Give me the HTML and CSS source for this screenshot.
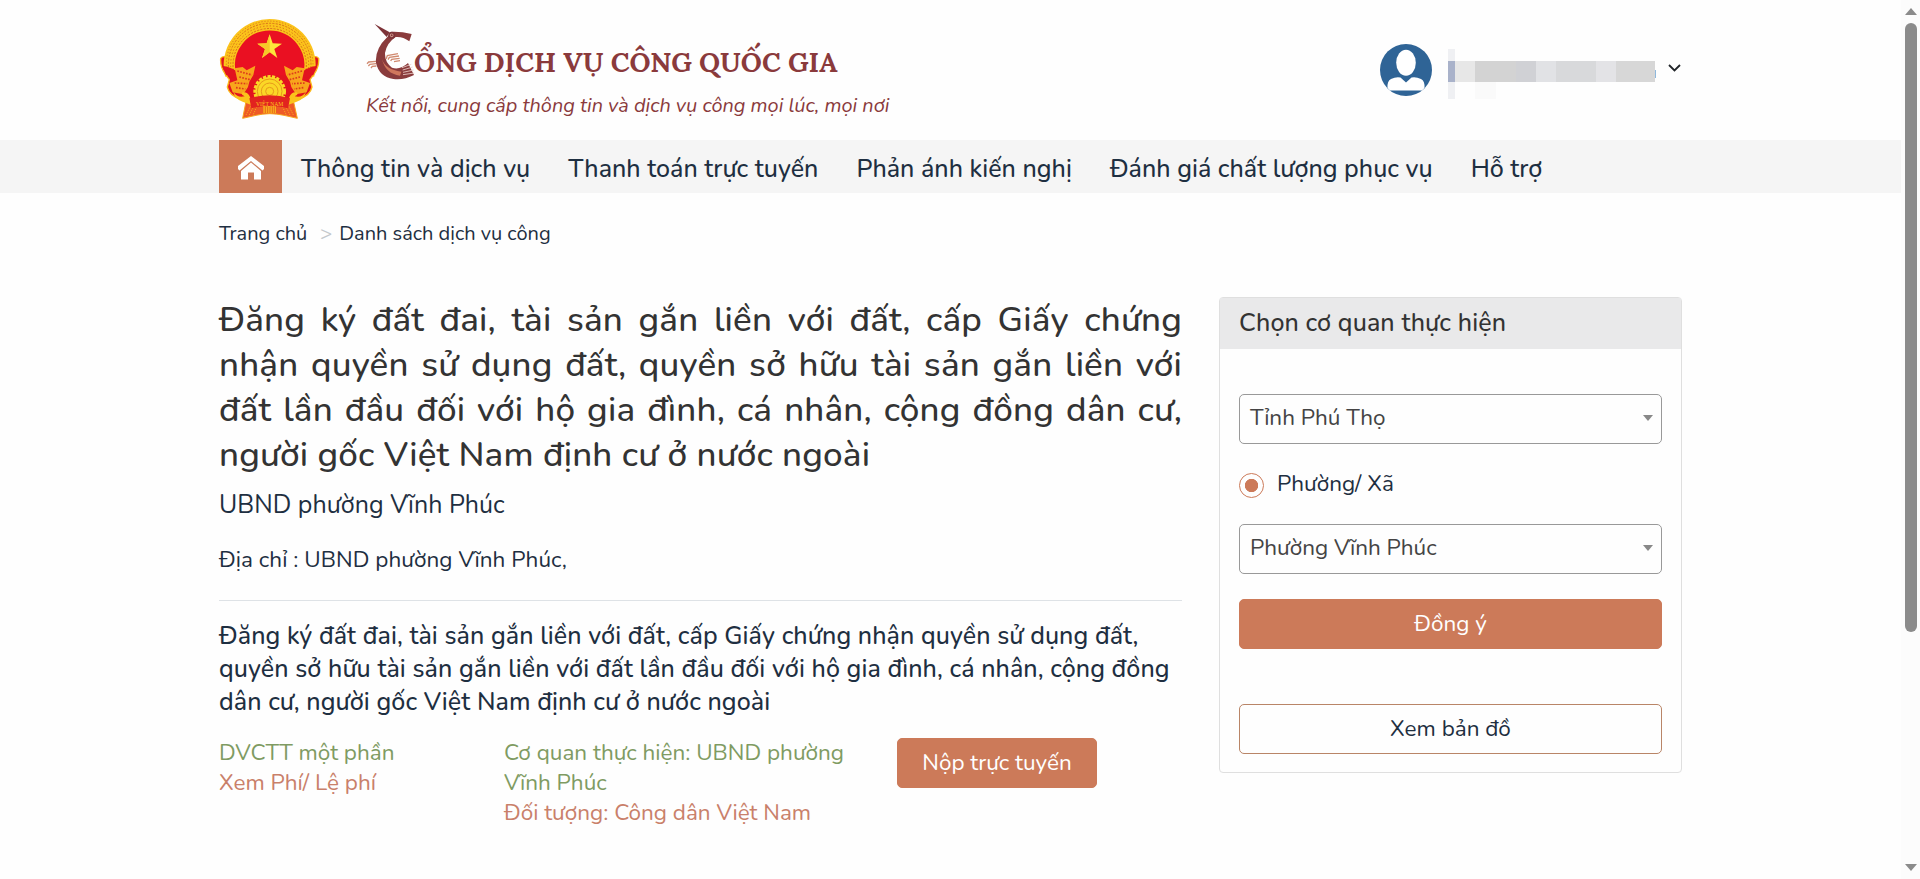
FILE: index.html
```html
<!DOCTYPE html>
<html lang="vi">
<head>
  <meta charset="UTF-8" />
  <meta name="viewport" content="width=device-width, initial-scale=1.0"/>
  <title>Cổng Dịch vụ công Quốc gia</title>
  <link rel="stylesheet" href="styles.css">
</head>
<body>
  <div class="page">
    <header class="header container">
      <svg class="emblem" viewBox="57 52 303 306">
        <!-- ribbon ends -->
        <path d="M128 356 L142 285 H276 L292 356 L252 347 Q209 337 168 347 Z" fill="#ee5a26" stroke="#f7a51c" stroke-width="3"/>
        <path d="M138 346 L152 318 M148 346 L160 322 M160 344 L170 322 M280 346 L266 318 M270 346 L258 322 M258 344 L248 322" stroke="#f7a51c" stroke-width="3" stroke-dasharray="4 3"/>
        <path d="M62 176 Q72 164 90 180 H328 Q346 164 356 176 Q358 200 343 222 L330 240 L336 262 Q330 288 296 298 L262 312 H156 L122 298 Q88 288 82 262 L88 240 L75 222 Q60 200 62 176 Z" fill="#e2131f" stroke="#fbb91a" stroke-width="4"/>
        <!-- rice wreath -->
        <path d="M92 227 A121 121 0 1 1 326 227" fill="#ea1022" stroke="#fbc31b" stroke-width="34"/>
        <g fill="none" stroke="#d9701a" stroke-width="3">
          <path d="M102 222 A110 110 0 1 1 316 222" stroke-dasharray="6 4"/>
          <path d="M95 222 A117 117 0 1 1 323 222" stroke-dasharray="4 6"/>
          <path d="M88 222 A124 124 0 1 1 330 222" stroke-dasharray="6 4"/>
          <path d="M82 222 A130 130 0 1 1 336 222" stroke-dasharray="3 6"/>
        </g>
        <path d="M66 198 Q98 200 128 230 Q100 240 78 226 Z M352 198 Q320 200 290 230 Q318 240 340 226 Z" fill="#e2131f"/>
        <path d="M104 206 L128 202 L140 212 L166 198 L160 226 L148 246 L144 262 L130 284 L98 278 L88 250 L112 242 Z M314 206 L290 202 L278 212 L252 198 L258 226 L270 246 L274 262 L288 284 L320 278 L330 250 L306 242 Z" fill="#f8a51c"/>
        <path d="M112 214 L156 226 M104 250 L142 252 M108 264 L136 268 M118 232 L150 240 M306 214 L262 226 M314 250 L276 252 M310 264 L282 268 M300 232 L268 240" stroke="#dd3a1c" stroke-width="5" stroke-dasharray="5 4"/>
        <path d="M209 104 L218 131 L246 132 L223 148 L232 175 L209 158 L186 175 L195 148 L172 132 L200 131 Z" fill="#fde63a"/>
        <path d="M209 104 V158 L186 175 L195 148 L172 132 L200 131 Z" fill="#f7c928"/>
        <!-- gear -->
        <circle cx="209" cy="275" r="43" fill="#fbd726" stroke="#fbd726" stroke-width="12" stroke-dasharray="9 4"/>
        <g fill="none" stroke="#e79a1b" stroke-width="3">
          <circle cx="209" cy="275" r="37"/>
          <circle cx="209" cy="275" r="25"/>
          <circle cx="209" cy="275" r="12"/>
        </g>
        <path d="M100 276 Q112 296 134 290 Q120 284 128 278 Q144 276 150 292 L154 316 L128 306 Q104 298 100 276 Z M318 276 Q306 296 284 290 Q298 284 290 278 Q274 276 268 292 L264 316 L290 306 Q314 298 318 276 Z" fill="#fbc31b"/>
        <path d="M148 296 Q209 278 270 296 L264 326 Q209 312 154 326 Z" fill="#e2231f"/>
        <path d="M190 320 H228 V340 H190 Z" fill="#f9b21c"/>
        <path d="M196 320 V340 M203 320 V340 M210 320 V340 M217 320 V340 M223 320 V340" stroke="#e2431f" stroke-width="2"/>
        <text class="emblem-text" x="209" y="318" text-anchor="middle">VIỆT NAM</text>
      </svg>

      <div class="brand">
        <div class="brand-title">
          <svg class="brand-bird" viewBox="498 68 147 171">
            <path d="M524 71 L569 96 L560 110 Z" fill="#7d3338"/>
            <path d="M575 94 Q605 93 635 101 L628 123 Q608 108 587 110 Q560 128 555 158 Q554 186 576 202 Q600 210 624 188 L642 224 Q612 240 580 236 Q538 230 528 188 Q524 146 562 110 Z" fill="#8a3b3c"/>
            <path d="M546 176 Q556 208 604 214 L600 226 Q556 220 546 176 Z" fill="#d0775c"/>
            <circle cx="575" cy="105" r="8" fill="#d9a294" stroke="#7d3338" stroke-width="5"/>
            <circle cx="575" cy="105" r="3" fill="#7d3338"/>
            <path d="M606 202 L634 192 M608 209 L638 200 M609 216 L641 209 M609 223 L643 218" stroke="#ecd0ca" stroke-width="2.5"/>
            <path d="M558 176 L562 166 L594 160 M564 178 L568 171 L597 167 M572 182 L575 177 L599 174 M582 184 L600 181 M528 183 L506 185 L501 190 M528 190 L510 192 L505 197 M529 197 L517 198 L513 203" fill="none" stroke="#d08a70" stroke-width="4"/>
          </svg>
          <span>ỔNG DỊCH VỤ CÔNG QUỐC GIA</span>
        </div>
        <div class="brand-slogan">Kết nối, cung cấp thông tin và dịch vụ công mọi lúc, mọi nơi</div>
      </div>

      <div class="user">
        <svg class="avatar" viewBox="0 0 52 52">
          <circle cx="26" cy="26" r="26" fill="#2f6496"/>
          <ellipse cx="26" cy="18.7" rx="9.8" ry="13" fill="#fff"/>
          <path d="M7.5 44 Q7 37 11 35 Q16 32.5 20.5 33.5 L26 38.5 L31.5 33.5 Q36 32.5 41 35 Q45 37 44.5 44 L42 46.5 H10 Z" fill="#fff"/>
        </svg>
        <svg class="user-name" viewBox="0 0 208 50">
          <path d="M0 0 H7 V50 H0 Z" fill="#eff0f3"/>
          <path d="M27 33 H48 V50 H27 Z" fill="#fafafa"/>
          <path d="M0 12 H7 V33 H0 Z" fill="#a9b2ca"/>
          <path d="M7 12 H27 V33 H7 Z" fill="#e7e7e7"/>
          <path d="M27 12 H68 V33 H27 Z" fill="#d3d3d3"/>
          <path d="M68 12 H88 V33 H68 Z" fill="#d0d1d5"/>
          <path d="M88 12 H108 V33 H88 Z" fill="#e1e2e5"/>
          <path d="M108 12 H148 V33 H108 Z" fill="#d8d9db"/>
          <path d="M148 12 H168 V33 H148 Z" fill="#e3e3e6"/>
          <path d="M168 12 H207 V33 H168 Z" fill="#d7d7d7"/>
          <path d="M207 21 H208 V29 H207 Z" fill="#8fb8dc"/>
        </svg>
        <svg class="user-caret" viewBox="0 0 13 8">
          <path d="M1 1 L6.5 6.5 L12 1" fill="none" stroke="#212529" stroke-width="1.8"/>
        </svg>
      </div>
    </header>

    <nav class="nav">
      <div class="nav-inner container">
        <a class="nav-home">
          <svg viewBox="0 0 26 24">
            <path d="M0 13 V10 L13 0 L26 10 V13 L24.5 14.5 L13 5 L1.5 14.5 Z" fill="#fff"/>
            <path d="M3 15 L13 6.5 L23 15 V23.5 H16 V16.5 H10 V23.5 H3 Z" fill="#fff"/>
          </svg>
        </a>
        <a class="nav-link">Thông tin và dịch vụ</a>
        <a class="nav-link">Thanh toán trực tuyến</a>
        <a class="nav-link">Phản ánh kiến nghị</a>
        <a class="nav-link">Đánh giá chất lượng phục vụ</a>
        <a class="nav-link">Hỗ trợ</a>
      </div>
    </nav>

    <div class="breadcrumb container">
      <a>Trang chủ</a>
      <span class="breadcrumb-sep">&gt;</span>
      <a>Danh sách dịch vụ công</a>
    </div>

    <main class="main container">
      <section class="content">
        <h1>Đăng ký đất đai, tài sản gắn liền với đất, cấp Giấy chứng nhận quyền sử dụng đất, quyền sở hữu tài sản gắn liền với đất lần đầu đối với hộ gia đình, cá nhân, cộng đồng dân cư, người gốc Việt Nam định cư ở nước ngoài</h1>
        <p class="agency">UBND phường Vĩnh Phúc</p>
        <p class="address">Địa chỉ : UBND phường Vĩnh Phúc,</p>
        <h2>Đăng ký đất đai, tài sản gắn liền với đất, cấp Giấy chứng nhận quyền sử dụng đất, quyền sở hữu tài sản gắn liền với đất lần đầu đối với hộ gia đình, cá nhân, cộng đồng dân cư, người gốc Việt Nam định cư ở nước ngoài</h2>
        <div class="service">
          <div class="service-col">
            <div class="green">DVCTT một phần</div>
            <a class="orange">Xem Phí/ Lệ phí</a>
          </div>
          <div class="service-col">
            <div class="green">Cơ quan thực hiện: UBND phường Vĩnh Phúc</div>
            <div class="orange">Đối tượng: Công dân Việt Nam</div>
          </div>
          <button class="btn">Nộp trực tuyến</button>
        </div>
      </section>

      <aside class="panel">
        <div class="panel-title">Chọn cơ quan thực hiện</div>
        <div class="panel-body">
          <div class="select"><span>Tỉnh Phú Thọ</span><i class="arrow"></i></div>
          <div class="radio"><i class="radio-dot"></i><span>Phường/ Xã</span></div>
          <div class="select"><span>Phường Vĩnh Phúc</span><i class="arrow"></i></div>
          <button class="btn btn-ok">Đồng ý</button>
          <button class="btn btn-map">Xem bản đồ</button>
        </div>
      </aside>
    </main>
  </div>

  <div class="scrollbar">
    <i class="scroll-up"></i>
    <div class="scroll-thumb"></div>
    <i class="scroll-down"></i>
  </div>
</body>
</html>
```
FILE: styles.css
```css
* {
    box-sizing: border-box;
}
body {
    margin: 0;
    height: 879px;
    overflow: hidden;
    display: flex;
    font-family: Nunito, 'Open Sans', 'Noto Sans', sans-serif;
    font-size: 22.5px;
    line-height: 30px;
    color: #1e2f41;
    background-color: #fefefe;
}
.page {
    width: 1901px;
}
.container {
    width: 1463px;
    margin-left: 219px;
}

/* header */
.header {
    height: 140px;
    display: flex;
}
.emblem {
    width: 101px;
    height: 102px;
    margin-top: 17px;
}
.emblem-text {
    font-family: 'Liberation Serif', serif;
    font-size: 17px;
    fill: #fbc31b;
}
.brand {
    margin-left: 46px;
    padding-top: 23px;
    color: #8a3a3c;
}
.brand-title {
    display: flex;
    height: 57px;
    font-family: Lora, 'Noto Serif', serif;
    font-size: 27.4px;
    font-weight: bold;
    line-height: 40px;
    white-space: nowrap;
}
.brand-title span {
    margin-top: 19px;
    margin-left: -1px;
}
.brand-bird {
    width: 49px;
    height: 57px;
}
.brand-slogan {
    margin-top: 11px;
    font-size: 19.9px;
    font-style: italic;
}
.user {
    display: flex;
    margin-left: auto;
}
.avatar {
    width: 52px;
    height: 52px;
    margin-top: 44px;
}
.user-name {
    width: 208px;
    height: 50px;
    margin: 49px 12px 0 16px;
}
.user-caret {
    width: 13px;
    height: 8px;
    margin-top: 64px;
    margin-right: 1px;
}

/* menu */
.nav {
    height: 53px;
    background-color: #f5f5f5;
}
.nav-inner {
    display: flex;
    gap: 38px;
    font-size: 25px;
    font-weight: 500;
    line-height: 59px;
    letter-spacing: 0.03px;
}
.nav-home {
    display: flex;
    align-items: center;
    justify-content: center;
    width: 63px;
    height: 53px;
    margin-right: -19px;
    background-color: #cc7a59;
}
.nav-home svg {
    width: 26px;
    height: 24px;
    margin-top: 2px;
}
.breadcrumb {
    display: flex;
    margin-top: 26px;
    font-size: 20px;
}
.breadcrumb-sep {
    margin: 0 7px 0 13px;
    color: #c4c8cc;
}

/* content */
.main {
    display: flex;
    align-items: flex-start;
    justify-content: space-between;
    margin-top: 48px;
}
.content {
    width: 963px;
}
h1 {
    margin: 0;
    font-size: 35px;
    font-weight: 500;
    line-height: 45px;
    letter-spacing: 0.16px;
    text-align: justify;
    color: #333;
}
.agency {
    margin: 10px 0 20px;
    font-size: 25px;
    line-height: 36px;
    letter-spacing: 0.05px;
}
.address {
    margin: 0;
    padding-bottom: 24px;
    line-height: 33px;
    letter-spacing: 0.05px;
    border-bottom: 1px solid #dee2e6;
}
h2 {
    margin: 19px 0;
    font-size: 25px;
    font-weight: 500;
    line-height: 33px;
    letter-spacing: 0.08px;
}
.service {
    display: grid;
    grid-template-columns: 285px 393px 200px;
    align-items: start;
}
.service-col {
    padding-right: 40px;
}
.green {
    color: #7f9b62;
}
.orange {
    color: #c9806a;
}

/* agency form */
.panel {
    width: 463px;
    height: 476px;
    border: 1px solid #dfdfdf;
    border-radius: 4px;
}
.panel-title {
    height: 51px;
    padding: 0 19px;
    font-size: 25px;
    font-weight: 500;
    line-height: 51px;
    letter-spacing: 0.12px;
    color: #333;
    background-color: #e9e9ea;
}
.panel-body {
    padding: 45px 19px 0;
}
.select {
    display: flex;
    align-items: center;
    justify-content: space-between;
    height: 50px;
    padding: 0 8px 2px 10px;
    border: 1px solid #999;
    border-radius: 5px;
    color: #444;
}
.arrow {
    border: 5px solid transparent;
    border-top: 6px solid #888;
    border-bottom: 0;
}
.radio {
    display: flex;
    align-items: center;
    gap: 13px;
    margin: 29px 0 26px;
    height: 25px;
}
.radio span {
    margin-top: -3px;
}
.radio-dot {
    width: 25px;
    height: 25px;
    border: 1px solid #cc7a59;
    border-radius: 50%;
    background: radial-gradient(circle, #cc7a59 6.3px, transparent 7px);
}
.btn {
    display: block;
    height: 50px;
    padding: 0 0 2px;
    border: 1px solid #cc7a59;
    border-radius: 5px;
    background-color: #cc7a59;
    color: #fff;
    font-family: inherit;
    font-size: 22.5px;
}
.btn-ok {
    width: 100%;
    margin: 25px 0 55px;
}
.btn-map {
    width: 100%;
    border-color: #b98567;
    background-color: transparent;
    color: #1e2f41;
}

/* scrollbar */
.scrollbar {
    width: 19px;
    height: 879px;
    padding: 8px 3px 8px 4px;
    display: flex;
    flex-direction: column;
    align-items: center;
    background-color: #fcfcfc;
}
.scroll-up {
    border: 6px solid transparent;
    border-top: 0;
    border-bottom: 7px solid #8b8b8b;
}
.scroll-thumb {
    width: 12px;
    height: 609px;
    margin: 8px 0 auto;
    border-radius: 6px;
    background-color: #8b8b8b;
}
.scroll-down {
    border: 6px solid transparent;
    border-top: 7px solid #8b8b8b;
    border-bottom: 0;
}
```
